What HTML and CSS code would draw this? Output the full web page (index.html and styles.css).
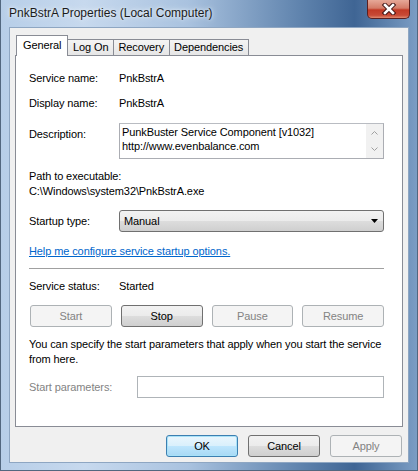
FILE: index.html
```html
<!DOCTYPE html>
<html lang="en">
<head>
<meta charset="UTF-8">
<title>PnkBstrA Properties (Local Computer)</title>
<link rel="stylesheet" href="styles.css">
</head>
<body>
<div class="window">
  <div class="titlebar">
    <span class="title">PnkBstrA Properties (Local Computer)</span>
    <span class="close">
      <svg width="16" height="12" viewBox="0 0 16 12">
        <path d="M4 2 L12 10 M12 2 L4 10" stroke="#3a1010" stroke-width="4.5" stroke-linecap="square"/>
        <path d="M4 2 L12 10 M12 2 L4 10" stroke="#fff" stroke-width="2.6" stroke-linecap="square"/>
      </svg>
    </span>
  </div>
  <div class="client">
    <div class="tabs">
      <span class="tab active">General</span>
      <span class="tab">Log On</span>
      <span class="tab">Recovery</span>
      <span class="tab">Dependencies</span>
    </div>
    <div class="panel">
      <div class="row first">
        <span class="label">Service name:</span>
        <span>PnkBstrA</span>
      </div>
      <div class="row">
        <span class="label">Display name:</span>
        <span>PnkBstrA</span>
      </div>
      <div class="row desc-row">
        <span class="label desc-label">Description:</span>
        <div class="desc-box">
          <div class="desc-text">PunkBuster Service Component [v1032]<br>http://www.evenbalance.com</div>
          <div class="scroll">
            <svg width="7" height="4" viewBox="0 0 7 4"><path d="M0.5 3.5 L3.5 0.5 L6.5 3.5" fill="none" stroke="#a0a0a0"/></svg>
            <svg width="7" height="4" viewBox="0 0 7 4"><path d="M0.5 0.5 L3.5 3.5 L6.5 0.5" fill="none" stroke="#a0a0a0"/></svg>
          </div>
        </div>
      </div>
      <div class="path-label">Path to executable:</div>
      <div class="path">C:\Windows\system32\PnkBstrA.exe</div>
      <div class="row startup-row">
        <span class="label">Startup type:</span>
        <div class="select">
          <span>Manual</span>
          <svg width="7" height="4" viewBox="0 0 7 4"><path d="M0 0 L7 0 L3.5 4 Z" fill="#000"/></svg>
        </div>
      </div>
      <a class="help" href="#">Help me configure service startup options.</a>
      <div class="separator"></div>
      <div class="row status-row">
        <span class="label">Service status:</span>
        <span>Started</span>
      </div>
      <div class="controls">
        <span class="btn disabled">Start</span>
        <span class="btn">Stop</span>
        <span class="btn disabled">Pause</span>
        <span class="btn disabled">Resume</span>
      </div>
      <p class="note">You can specify the start parameters that apply when you start the service from here.</p>
      <div class="row params-row">
        <span class="label params-label">Start parameters:</span>
        <div class="params-input"></div>
      </div>
    </div>
    <div class="actions">
      <span class="btn default">OK</span>
      <span class="btn">Cancel</span>
      <span class="btn disabled">Apply</span>
    </div>
  </div>
</div>
</body>
</html>
```

FILE: styles.css
```css
body {
  margin: 0;
  font-family: 'Liberation Sans', Arial, sans-serif;
  font-size: 11px;
  letter-spacing: -0.1px;
  color: #000;
  background: #fff;
}
.window {
  width: 418px;
  height: 471px;
  box-sizing: border-box;
  padding: 0 8px 7px 8px;
  background: linear-gradient(90deg, #b7cee8 0%, #c7d9ee 20%, #a9c2df 45%, #5f83ad 72%, #3f6594 85%, #7b9dc4 100%);
  border: 1px solid #52677f;
  border-top: none;
  display: flex;
  flex-direction: column;
}
.titlebar {
  height: 27px;
  display: flex;
  justify-content: space-between;
  align-items: flex-start;
}
.title {
  margin-top: 6px;
  font-size: 12px;
  letter-spacing: 0;
  color: #1b1b1b;
  text-shadow: 0 0 6px #e8f0f8, 0 0 3px #e8f0f8;
}
.close {
  width: 43px;
  height: 19px;
  margin-right: -1px;
  box-sizing: border-box;
  border: 1px solid #5b2020;
  border-top: none;
  border-radius: 0 0 5px 5px;
  background: linear-gradient(#e6a898 0%, #d47c68 45%, #c23a26 55%, #c84a36 85%, #e08a70 100%);
  display: flex;
  align-items: center;
  justify-content: center;
}
.client {
  flex: 1;
  background: #f0f0f0;
  border: 1px solid #8ea6c2;
  padding: 7px 5px 0 5px;
  display: flex;
  flex-direction: column;
}
.tabs {
  display: flex;
  align-items: flex-end;
  padding-left: 1px;
  height: 20px;
  position: relative;
  z-index: 1;
}
.tab {
  height: 16px;
  line-height: 15px;
  padding: 0 4.5px;
  border: 1px solid #898c95;
  border-bottom: none;
  margin-right: -1px;
  background: linear-gradient(#f4f4f4, #e6e6e6);
  box-sizing: border-box;
}
.tab.active {
  height: 21px;
  line-height: 18px;
  padding: 0 6px;
  background: #fff;
  margin-bottom: -1px;
}
.panel {
  height: 372px;
  box-sizing: border-box;
  background: #fff;
  border: 1px solid #898c95;
  padding: 15px 18px 0 13px;
  line-height: 15px;
}
.row {
  display: flex;
  align-items: center;
}
.label {
  width: 90px;
  flex: none;
}
.row + .row {
  margin-top: 10px;
}
.row.desc-row {
  margin-top: 12px;
  align-items: flex-start;
}
.desc-label {
  padding-top: 4px;
}
.desc-box {
  flex: 1;
  height: 36px;
  box-sizing: border-box;
  border: 1px solid #abadb3;
  border-top-color: #b9bcc2;
  display: flex;
}
.desc-text {
  flex: 1;
  padding: 1px 0 0 2px;
  line-height: 14px;
}
.scroll {
  width: 17px;
  background: #f1f1f1;
  display: flex;
  flex-direction: column;
  align-items: center;
  justify-content: space-between;
  padding: 7px 0 7px;
  box-sizing: border-box;
}
.path-label {
  margin-top: 10px;
}
.row.startup-row {
  margin-top: 11px;
}
.select {
  flex: 1;
  height: 22px;
  box-sizing: border-box;
  border: 1px solid #707070;
  border-radius: 3px;
  background: linear-gradient(#f2f2f2 0%, #ebebeb 50%, #dddddd 50%, #cfcfcf 100%);
  display: flex;
  align-items: center;
  justify-content: space-between;
  padding: 0 5px 0 4px;
}
.help {
  display: block;
  margin-top: 12px;
  color: #0066cc;
  text-decoration: underline;
}
.separator {
  margin-top: 9px;
  height: 1px;
  background: #a0a0a0;
}
.row.status-row {
  margin-top: 10px;
}
.controls {
  margin-top: 11px;
  display: grid;
  grid-template-columns: repeat(4, 1fr);
  gap: 9px;
  padding-left: 1px;
}
.btn {
  height: 22px;
  box-sizing: border-box;
  border: 1px solid #707070;
  border-radius: 3px;
  background: linear-gradient(#f2f2f2 0%, #ebebeb 50%, #dddddd 50%, #cfcfcf 100%);
  display: flex;
  align-items: center;
  justify-content: center;
}
.btn.disabled {
  border-color: #adb2b5;
  background: #f4f4f4;
  color: #838383;
}
.btn.default {
  border-color: #3c7fb1;
  box-shadow: inset 0 0 0 1px #a8e2f8;
  background: linear-gradient(#eaf6fd 0%, #d9f0fc 50%, #bee6fd 50%, #a7d9f5 100%);
}
.note {
  margin: 10px 0 0;
}
.row.params-row {
  margin-top: 9px;
}
.params-label {
  width: 108px;
  color: #838383;
}
.params-input {
  flex: 1;
  height: 22px;
  box-sizing: border-box;
  border: 1px solid #afb4b8;
  background: #fff;
}
.actions {
  display: flex;
  justify-content: flex-end;
  gap: 10px;
  margin-top: 8px;
  padding-right: 1px;
}
.actions .btn {
  width: 72px;
}
```
